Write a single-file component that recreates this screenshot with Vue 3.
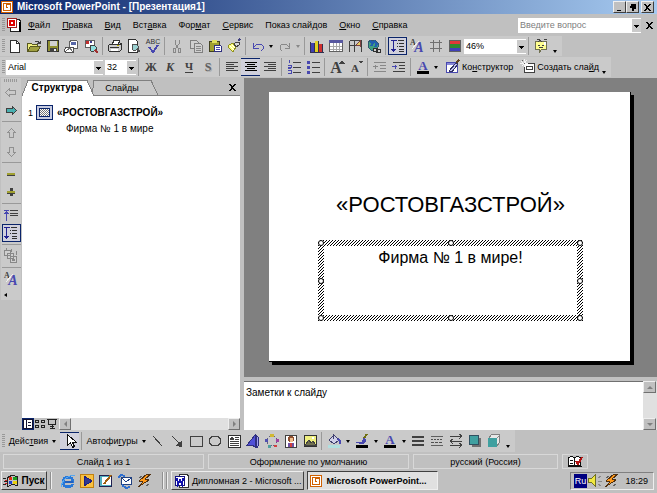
<script setup>
import { ref } from 'vue'

const font = ref('Arial')
const size = ref('32')
const zoom = ref('46%')
const notes = ref('Заметки к слайду')
const question = ref('')

const menus = [
  ['', 'Ф', 'айл'], ['', 'П', 'равка'], ['', 'В', 'ид'], ['Вст', 'а', 'вка'], ['Фор', 'м', 'ат'],
  ['', 'С', 'ервис'], ['Показ слай', 'д', 'ов'], ['', 'О', 'кно'], ['', 'С', 'правка'],
]

const lines = (x, ys, w, c = '#404040') => ys.map((y) => `<rect x="${x}" y="${y}" width="${w}" height="1" fill="${c}"/>`).join('')
const path = (d, stroke = '#404040', fill = 'none', w = 1) => `<path d="${d}" stroke="${stroke}" fill="${fill}" stroke-width="${w}"/>`
const box = (x, y, w, h, c) => `<rect x="${x}" y="${y}" width="${w}" height="${h}" fill="${c}"/>`
const blue = '#4848b0'
const glyph = (t, c, extra = '', x = 8, y = 13, s = 13) =>
  `<text x="${x}" y="${y}" font-size="${s}" text-anchor="middle" font-family="Liberation Serif, serif" font-weight="bold" fill="${c}" ${extra}>${t}</text>`

const icons = {
  app: box(0, 0, 12, 12, '#d06000') + path('M1.5 1.500h9v9h-9z', '#fff') + path('M4 3v5h4V5H6', '#fff', 'none', 2),
  doc: path('M4.500 2.500h9l1 2v10h-10z', '#202020', '#fff') + path('M1.500 1.500h9v9h-9z', '#a02020', '#fff') + path('M4 4v4h4V4z', '#e00000', 'none', 2) + box(13, 5, 2, 10, '#000'),
  fresh: path('M3.500 2.500h6l3 3v9h-9z', '#303030', '#fff') + path('M9.500 2.500v3h3', '#303030'),
  open: path('M1.500 13.500v-8h4l1 1h5v2', '#585820', '#f0f080') + path('M1.500 13.500l3-5h10l-3 5z', '#585820', '#a0a040') + path('M9 3.500h3l2 2m0-3v3h-3', '#404040'),
  save: path('M2.500 2.500h11v11h-11z', '#303030', '#909030') + box(5, 3, 7, 5, '#d0d0d0') + box(5, 10, 7, 4, '#404040') + box(9, 11, 2, 2, '#eee'),
  mail: path('M5.500 10.500v-7l2-1h5l1 1v7z', '#606060', '#fff') + box(7, 4, 5, 3, '#5868a8') + path('M1.500 9.500h8v5h-8l-1-2z', '#505050', '#fff') + path('M2 13l4-3 3 4', '#707070'),
  find: box(2, 2, 9, 8, '#fff') + path('M2.500 2.500h9v7h-9z', '#606060') + box(3, 3, 3, 3, '#c03030') + box(7, 3, 2, 2, '#404090') + path('M7 7h4l2 2v3l-2 1H8l-1-2z', '#404040', '#90e0e0') + path('M12 12l3 3', '#a03030', 'none', 2),
  print: path('M5.500 6.500l1-4h6l-1 4z', '#303030', '#fff') + path('M2.500 6.500h10l2-1v6l-2 2h-10l-1-1v-5z', '#303030', '#ccc') + box(3, 9, 9, 1, '#303030') + box(4, 11, 7, 2, '#fff') + box(10, 7, 2, 1, '#c0b000'),
  preview: path('M2.500 1.500h7l2 2v11h-9z', '#303030', '#fff') + path('M7 6h3l2 2v3l-2 1H7L6 10V8z', '#505050', '#9ad0d0') + path('M11 11l3 3', '#505050', 'none', 2),
  spell: `<text x="8" y="6" font-size="7" text-anchor="middle" font-family="Liberation Sans" fill="#303030">ABC</text>` + path('M4 9l4 5 5-7', blue, 'none', 2),
  cut: path('M6 2v4l4 5M10 2v4l-4 5M4.500 10.500h2v4h-2zM9.500 10.500h2v4h-2z', '#888'),
  copy: path('M2.500 2.500h6l2 2v6h-8z', '#808080', '#d0d0d0') + path('M6.500 5.500h6l2 2v7h-8z', '#808080', '#d0d0d0') + lines(8, [8, 10, 12], 5, '#888'),
  paste: path('M2.500 3.500h10v10h-10z', '#404020', '#a0a030') + box(5, 2, 5, 3, '#e0e060') + path('M7.500 7.500h6l1 1v5h-7z', '#303080', '#fff') + lines(9, [9, 11], 4, blue),
  brush: path('M3 7l4-2 3 4-3 5-5-5z', '#909020', '#ffff80') + path('M4 8l4 4M6 7l3 3', '#fff') + path('M8 6l2-2h3v3l-3 2z', '#404040', '#d8d8d8') + path('M12 3l2-2', '#404080', 'none', 2),
  undo: path('M3.500 5v5h5M4 9l3-3h4l2 2v3l-2 2', blue),
  redo: path('M12.500 5v5h-5M12 9l-3-3H5L3 8v3l2 2', '#888'),
  chart: box(2, 5, 3, 9, '#4040b0') + box(6, 3, 3, 11, '#e0d020') + box(10, 6, 3, 8, '#d03030') + path('M1.500 4v10.500h13M5.500 5v9M9.500 3v11M13.500 6v8', '#303050'),
  table: path('M1.500 2.500h13v11h-13z', '#606060', '#fff') + box(1, 2, 14, 3, '#5858a0') + path('M2 8.500h12M2 11.500h12M5.500 5v8M8.500 5v8M11.500 5v8', '#a8a8a8'),
  grid: path('M2.500 2.500h12v11M2.500 2.500v11M2 7.500h12M7.500 3v11', '#404040') + path('M9 7l4-4v5z', '#804040', '#e8d060'),
  globe: path('M4 2h5l3 3v4l-3 3H5L2 9V5z', '#305870', '#40a080') + path('M4 3l3 2-2 3M8 3l3 3-2 3', '#2060b0', 'none', 2) + path('M7.500 10.500h4v3h-4zM10.500 11.500h4v3h-4z', '#303030', '#d0d0d0'),
  outline: path('M3.500 3v11M1 11.500h5M2 12.500h3M1 2.500h6', '#202090') + lines(8, [2], 6, '#303030') + lines(9, [5, 8, 11, 13], 5, '#303030') + lines(7, [5, 8], 1, '#303030'),
  style: glyph('A', '#404040', '', 4, 7, 8) + glyph('A', blue, 'font-style="italic"', 10, 14, 14) + path('M3 11L10 3', '#eee'),
  hash: path('M5.500 2v12M11.500 2v12M2 4.500h12M2 10.500h12', '#707070'),
  colors: box(2, 2, 12, 4, '#e03838') + box(2, 6, 12, 4, '#308830') + box(2, 10, 12, 4, '#4040b8') + path('M2.500 2.500h11v11h-11z', '#606060'),
  help: path('M2.500 3.500h11v8h-5l-2 3v-3h-4z', '#707050', '#ffff90') + path('M5 4l2-2 2 2M5 7h2m2 0h2M6 9h4M4 1h3m4 0h3', '#404040') + box(11, 4, 2, 3, '#fff'),
  bold: glyph('Ж', '#404040', '', 8, 12, 12),
  ital: glyph('К', '#404040', 'font-style="italic"', 8, 12, 12),
  under: glyph('Ч', '#404040', '', 8, 11, 11) + lines(4, [13], 8),
  shade: glyph('S', '#aaa', '', 9, 13, 12) + glyph('S', '#606060', '', 8, 12, 12),
  left: lines(2, [3, 7, 11], 12) + lines(2, [5, 9], 8),
  center: lines(2, [3, 7, 11], 12, '#000') + lines(4, [5, 9], 8, '#000'),
  right: lines(2, [3, 7, 11], 12) + lines(6, [5, 9], 8),
  numbers: path('M3.500 1v3M2 6.500h3v2H2v1h3M2 11.500h3v3H2', blue) + lines(7, [3, 8, 13], 8),
  bullets: box(2, 2, 3, 3, blue) + box(2, 7, 3, 3, blue) + box(2, 12, 3, 3, blue) + lines(7, [3, 8, 13], 8),
  grow: glyph('A', '#404040', '', 7, 14, 16) + path('M11 4l2-2 2 2z', '#404040', '#404040'),
  shrink: glyph('A', '#404040', '', 7, 13, 11) + path('M11 2h4l-2 2z', '#404040', '#404040'),
  outdent: lines(2, [3, 12], 12, '#888') + lines(8, [6, 9], 6, '#888') + path('M1 7.500h5M3.500 5.500v4', '#888'),
  indent: lines(2, [3, 12], 12) + lines(8, [6, 9], 6) + path('M1 7.500h5M4.500 5.500v4', blue),
  fontcolor: glyph('A', blue, '', 8, 11, 13) + box(2, 12, 12, 3, '#000'),
  design: path('M1.500 3.500h11v10h-11z', '#4848b0', '#fff') + box(2, 4, 10, 2, '#8888d8') + path('M4 12l7-8 2 1-6 8z', '#303060', '#c0c0f0') + path('M11 4l3-3', '#604020', 'none', 2),
  slide: path('M4.500 4.500h10v9h-10z', '#404040', '#fff') + path('M6.500 7.500h6v3h-6z') + path('M1 2l5 5M4.500 0v8M0 4.500h8M7 1L2 7', '#f4f4f4') + path('M4 4.500h1M2 1l1 1', '#606060'),
  back: path('M6.500 4.500l-4 4 4 4v-2h6v-4h-6z', '#909090'),
  forward: path('M9.500 4.500l4 4-4 4v-2h-6v-4h6z', '#404040', '#48b0b0'),
  up: path('M8.500 3.500l4 4h-2v5h-4v-5h-2z', '#909090'),
  down: path('M8.500 13.500l4-4h-2v-5h-4v5h-2z', '#909090'),
  minus: box(4, 7, 8, 3, '#404040') + box(4, 7, 8, 2, '#a0a030'),
  plus: box(4, 7, 8, 3, '#404040') + box(7, 4, 3, 8, '#404040') + box(4, 7, 8, 2, '#a0a030'),
  collapse: path('M3.500 4v10M1 6.500h5M2 5.500h3M1 3.500h5', blue) + lines(7, [3, 6, 8], 8),
  summary: path('M1.500 2.500h6v5h-6zM4.500 5.500h6v5h-6zM7.500 8.500h6v6h-6z', '#888', '#d0d0d0') + lines(9, [11, 12], 3, '#888') + path('M3 0v3M8 1v3M13 3v4', '#888'),
  cursor: path('M5.500 1.500v11l3-3 2 5 2-1-2-4h4z', '#101010', '#fff'),
  line: path('M3 3l9 10'),
  arrow: path('M3 3l8 8') + path('M12.500 13.500v-5l-5 4z', '#404040', '#404040'),
  rect: path('M2.500 3.500h12v10h-12z'),
  oval: '<ellipse cx="8" cy="8" rx="6" ry="5" fill="none" stroke="#404040"/>',
  textbox: path('M2.500 2.500h12v12h-12z', '#303030', '#fff') + path('M4 7l2-3 2 3M5 6h2') + lines(9, [4, 6], 4) + lines(4, [8, 10, 12], 9),
  wordart: path('M2 12L10 2v12l-3-2H5z', '#303080', '#5050d8') + path('M11 2l2 2v9l-1 2z', '#303080', '#a0a0f0'),
  diagram: '<circle cx="8" cy="8" r="5" fill="none" stroke="#606080" stroke-dasharray="2"/>' + box(6, 1, 4, 3, '#d0b830') + box(1, 6, 3, 3, '#5050b0') + box(12, 6, 3, 3, '#a040a0') + box(4, 12, 3, 3, '#50a0a0') + box(10, 12, 3, 2, '#d04040'),
  clip: path('M2.500 2.500h11v12h-11z', '#404040', '#fff') + '<circle cx="8" cy="6" r="3" fill="#905030"/>' + box(7, 5, 3, 4, '#f0c090') + box(5, 10, 6, 4, '#7050a0') + box(7, 10, 2, 4, '#d04040'),
  picture: path('M2.500 2.500h12v11h-12z', '#303030', '#f0f080') + path('M3 12l4-5 2 3 2-2 3 4z', '#404040', '#707050') + box(10, 4, 2, 2, '#fff'),
  bucket: path('M3 7l5-5 5 5-5 4z', '#404070', '#d0d0e8') + path('M7.500 1v5', '#404070') + path('M12 6l2 2v3', blue, 'none', 2) + box(2, 12, 12, 3, '#b0e0e0'),
  pen: path('M2 9h6l2-4 2 2-2 3-4 1', blue, blue) + path('M10 5l3-4', '#707010', 'none', 2) + box(2, 12, 12, 3, '#000'),
  weight: box(2, 3, 12, 2, '#404040') + box(2, 7, 12, 2, '#404040') + box(2, 11, 12, 2, '#404040'),
  dash: lines(2, [3, 12], 12, '#606060') + path('M2 6.500h12', '#505050').replace('/>', ' stroke-dasharray="2 1"/>') + path('M2 9.500h12', '#505050').replace('/>', ' stroke-dasharray="3 1"/>'),
  arrows: path('M2 3.500h12M2 8.500h12M2 12.500h12M11 1l3 2-3 3M5 6L2 8l3 3M11 10l3 2-3 3'),
  shadow: box(5, 5, 9, 9, '#707070') + path('M2.500 2.500h9v9h-9z', '#305060', '#40a0a0'),
  cube: path('M2.500 5.500l3-4h8v8l-3 4h-8z', '#808080', '#e8e8e8') + box(2, 5, 9, 9, '#40a0a0') + path('M11 5l3-3', '#888'),
  normal: path('M1.500 1.500h9v9h-9zM4.500 1v10M6 4.500h3M6 7.500h3', '#101030', '#fff'),
  sorter: path('M1.500 2.500h3v2h-3zM7.500 2.500h3v2h-3zM1.500 7.500h3v2h-3zM7.500 7.500h3v2h-3z', '#202020'),
  show: path('M1 1.500h10M2.500 1v5h7V1M6.500 6v4M4 10.500h5M4 8.500h4', '#202020'),
  flag: path('M4.500 4.500l4-2 6 1v9l-5-1-5 2z', '#202020') + box(6, 4, 3, 3, '#e03010') + box(10, 4, 4, 3, '#20a020') + box(6, 8, 3, 3, '#2040d0') + box(10, 8, 4, 3, '#e8d010') + path('M0 5.500h3M1 8.500h3M0 11.500h3', '#202020') + path('M2 7h2M2 10h2', '#d02020'),
  ie: '<circle cx="8" cy="9" r="5" fill="none" stroke="#2878d8" stroke-width="3"/>' + box(5, 8, 8, 2, '#2060c0') + box(10, 10, 5, 1, '#c0c0c0') + path('M1 14C2 7 9 1 15 3', '#58a8f0'),
  media: path('M1.500 1.500h13v13h-13z', '#c08010', '#f8c040') + path('M5 3v10l8-5z', '#202080', '#303890'),
  desktop: path('M1.500 2.500h12v11h-12z', '#202050', '#50b0c0') + path('M4 4h8v7H4z', '#fff', '#fff') + path('M6 11l7-9', '#a06010', 'none', 2),
  outlook: path('M4.500 4.500h10v7h-10z', '#204080', '#fff') + path('M5 5l4 4 5-4', '#204080') + path('M1 5l3-3 4 1M13 14l-4 1-4-3', '#3070d0', 'none', 2),
  winamp: path('M11 1L3 8l4 1-5 5 11-7-4-1 6-5z', '#503010', '#ff9818') + path('M3 5l3-2M10 13l3-2', '#606060'),
  word: path('M5.500 1.500h8l1 2v11h-9z', '#303030', '#fff') + path('M1.500 3.500h9v9h-9z', '#101080', '#fff') + path('M3 5l1 6 2-4 2 4 1-6', '#1010b0', 'none', 2),
  speaker: path('M1.500 5.500h3l4-4v12l-4-4h-3z', '#707020', '#f0e840') + path('M11 5l3-2M11 8h4M11 11l3 2', '#888'),
  book: path('M1.500 3.500l3-1 3 1 3-1 3 1v8h-12z', '#101010', '#fff') + path('M7.500 4v8M1 12.500h14M3 6h3M3 9h3', '#101010') + path('M9 7l2 3 4-7', '#b01010', 'none', 2),
}

const standard = [
  ['fresh', 'Создать'], ['open', 'Открыть'], ['save', 'Сохранить'], ['mail', 'Сообщение'], ['find', 'Найти'], '|',
  ['print', 'Печать'], ['preview', 'Просмотр'], ['spell', 'Орфография'], '|',
  ['cut', 'Вырезать'], ['copy', 'Копировать'], ['paste', 'Вставить'], ['brush', 'Формат по образцу'], '|',
  ['undo', 'Отменить'], 'v', ['redo', 'Вернуть'], 'w', '|',
  ['chart', 'Диаграмма'], ['table', 'Таблица'], ['grid', 'Таблицы и границы'], ['globe', 'Гиперссылка'], '|',
  ['outline', 'Развернуть все', true], ['style', 'Формат'], ['hash', 'Сетка'], ['colors', 'Цвет или оттенки'],
]
const format = [
  '|', ['bold', 'Полужирный'], ['ital', 'Курсив'], ['under', 'Подчеркнутый'], ['shade', 'Тень'], '|',
  ['left', 'По левому краю'], ['center', 'По центру', true], ['right', 'По правому краю'], '|',
  ['numbers', 'Нумерация'], ['bullets', 'Маркеры'], '|', ['grow', 'Увеличить шрифт'], ['shrink', 'Уменьшить шрифт'], '|',
  ['outdent', 'Уменьшить отступ'], ['indent', 'Увеличить отступ'], '|', ['fontcolor', 'Цвет шрифта'], 'v',
]
const side = [
  ['back', 'Повысить уровень'], ['forward', 'Понизить уровень'], '|', ['up', 'Вверх'], ['down', 'Вниз'], '|',
  ['minus', 'Свернуть'], ['plus', 'Развернуть'], '|', ['collapse', 'Свернуть все'], ['outline', 'Развернуть все', true], '|',
  ['summary', 'Итоговый слайд'], '|', ['style', 'Формат'],
]
const drawing = [
  ['line', 'Линия'], ['arrow', 'Стрелка'], ['rect', 'Прямоугольник'], ['oval', 'Овал'], ['textbox', 'Надпись'],
  ['wordart', 'WordArt'], ['diagram', 'Организационная диаграмма'], ['clip', 'Картинка'], ['picture', 'Рисунок'], '|',
  ['bucket', 'Цвет заливки'], 'v', ['pen', 'Цвет линий'], 'v', ['fontcolor', 'Цвет шрифта'], 'v',
  ['weight', 'Тип линии'], ['dash', 'Тип штриха'], ['arrows', 'Вид стрелки'], ['shadow', 'Тень'], ['cube', 'Объем'],
]
const views = [['normal', 'Обычный', true], ['sorter', 'Сортировщик'], ['show', 'Показ']]
const quick = [['ie', 'Internet Explorer'], ['media', 'Media Player'], ['desktop', 'Свернуть все окна'], ['outlook', 'Outlook Express'], ['winamp', 'Winamp']]
const handles = ['nw', 'n', 'ne', 'w', 'e', 'sw', 's', 'se']
</script>

<template>
  <div class="screen">
    <header class="titlebar">
      <svg class="icon small" viewBox="0 0 12 12" v-html="icons.app" />
      <h1>Microsoft PowerPoint - [Презентация1]</h1>
      <button class="win" aria-label="Свернуть"><svg viewBox="0 0 9 9"><path d="M2 7h4v1H2z" /></svg></button>
      <button class="win" aria-label="Восстановить"><svg viewBox="0 0 9 9"><path d="M3 1h5v5H6v2H4V5H2V3h1z" /></svg></button>
      <button class="win close" aria-label="Закрыть"><svg viewBox="0 0 9 9"><path d="M1 1h2l1.500 2L6 1h2L5.500 4.500 8 8H6L4.500 6 3 8H1l2.500-3.500z" /></svg></button>
    </header>

    <nav class="menubar">
      <i class="grip" />
      <svg class="icon" viewBox="0 0 16 16" v-html="icons.doc" />
      <button v-for="m in menus" :key="m.join('')" class="menu">{{ m[0] }}<u>{{ m[1] }}</u>{{ m[2] }}</button>
      <div class="combo ask">
        <input v-model="question" aria-label="Введите вопрос" placeholder="Введите вопрос">
      </div>
      <button class="docclose" aria-label="Закрыть документ"><svg viewBox="0 0 9 9"><path d="M1 1h2l1.500 2L6 1h2L5.500 4.500 8 8H6L4.500 6 3 8H1l2.500-3.500z" /></svg></button>
    </nav>

    <div class="bar">
      <i class="grip" />
      <template v-for="(t, i) in standard" :key="i">
        <i v-if="t === '|'" class="sep" />
        <button v-else-if="t === 'v' || t === 'w'" class="drop" :class="{ dim: t === 'w' }" aria-label="Список" />
        <button v-else class="tool" :class="{ on: t[2] }" :aria-label="t[1]"><svg class="icon" viewBox="0 0 16 16" v-html="icons[t[0]]" /></button>
      </template>
      <div class="combo zoom">
        <select v-model="zoom" aria-label="Масштаб"><option>46%</option><option>100%</option></select>
      </div>
      <i class="sep" />
      <button class="tool" aria-label="Справка"><svg class="icon" viewBox="0 0 16 16" v-html="icons.help" /></button>
      <button class="drop low" aria-label="Параметры панели" />
    </div>

    <div class="bar">
      <i class="grip" />
      <div class="combo font">
        <select v-model="font" aria-label="Шрифт"><option>Arial</option><option>Tahoma</option></select>
      </div>
      <div class="combo size">
        <select v-model="size" aria-label="Размер"><option>32</option><option>44</option></select>
      </div>
      <template v-for="(t, i) in format" :key="i">
        <i v-if="t === '|'" class="sep" />
        <button v-else-if="t === 'v'" class="drop" aria-label="Список" />
        <button v-else class="tool" :class="{ on: t[2], edge: t[2] }" :aria-label="t[1]"><svg class="icon" viewBox="0 0 16 16" v-html="icons[t[0]]" /></button>
      </template>
      <button class="wide"><svg class="icon" viewBox="0 0 16 16" v-html="icons.design" /><span>Ко<u>н</u>структор</span></button>
      <button class="wide"><svg class="icon" viewBox="0 0 16 16" v-html="icons.slide" /><span>Создать сла<u>й</u>д</span></button>
      <button class="drop low" aria-label="Параметры панели" />
    </div>

    <main class="work">
      <div class="side">
        <i class="grip flat" />
        <template v-for="(t, i) in side" :key="i">
          <i v-if="t === '|'" class="sep flat" />
          <button v-else class="tool" :class="{ on: t[2] }" :aria-label="t[1]"><svg class="icon" viewBox="0 0 16 16" v-html="icons[t[0]]" /></button>
        </template>
        <button class="more" aria-label="Параметры панели" />
      </div>

      <section class="outline">
        <div class="tabs" role="tablist">
          <button class="tab active" role="tab" aria-selected="true">
            <svg viewBox="0 0 72 16" preserveAspectRatio="none"><path d="M0 16L6 .5h59L72 16" /></svg><span>Структура</span>
          </button>
          <button class="tab" role="tab" aria-selected="false">
            <svg viewBox="0 0 66 15" preserveAspectRatio="none"><path d="M0 15L2 .5h57L66 15" /></svg><span>Слайды</span>
          </button>
          <button class="tabclose" aria-label="Закрыть область"><svg viewBox="0 0 9 9"><path d="M1 1h2l1.500 2L6 1h2L5.500 4.500 8 8H6L4.500 6 3 8H1l2.500-3.500z" /></svg></button>
        </div>
        <div class="tree">
          <div class="node"><span class="num">1</span><i class="thumb" /><strong>«РОСТОВГАЗСТРОЙ»</strong></div>
          <p>Фирма № 1 в мире</p>
        </div>
        <div class="viewbar">
          <button v-for="v in views" :key="v[0]" class="view" :class="{ on: v[2] }" :aria-label="v[1]"><svg class="icon small" viewBox="0 0 12 12" v-html="icons[v[0]]" /></button>
          <div class="hscroll">
            <button class="sb l" aria-label="Влево" /><button class="sb r" aria-label="Вправо" />
          </div>
        </div>
      </section>

      <section class="editor">
        <div class="stage">
          <article class="page">
            <h2>«РОСТОВГАЗСТРОЙ»</h2>
            <div class="frame">
              <svg class="hatch" aria-hidden="true">
                <defs><pattern id="hatch" width="3" height="3" patternUnits="userSpaceOnUse"><path d="M2 0h1v1H2zM1 1h1v1H1zM0 2h1v1H0z" /></pattern></defs>
                <rect width="100%" height="100%" fill="url(#hatch)" />
              </svg>
              <p>Фирма № 1 в мире!</p>
              <i v-for="h in handles" :key="h" class="handle" :class="h" />
            </div>
          </article>
        </div>
        <div class="notes">
          <textarea v-model="notes" aria-label="Заметки к слайду" />
          <div class="vscroll">
            <button class="sb t" aria-label="Вверх" /><button class="sb b" aria-label="Вниз" />
          </div>
        </div>
      </section>
    </main>

    <div class="bar draw">
      <i class="grip" />
      <button class="menu actions">Дейс<u>т</u>вия<i class="tri" /></button>
      <button class="tool on edge" aria-label="Выбор объектов"><svg class="icon" viewBox="0 0 16 16" v-html="icons.cursor" /></button>
      <i class="sep" />
      <button class="menu shapes">Автофи<u>г</u>уры<i class="tri" /></button>
      <template v-for="(t, i) in drawing" :key="i">
        <i v-if="t === '|'" class="sep" />
        <button v-else-if="t === 'v'" class="drop" aria-label="Список" />
        <button v-else class="tool" :aria-label="t[1]"><svg class="icon" viewBox="0 0 16 16" v-html="icons[t[0]]" /></button>
      </template>
      <button class="drop low" aria-label="Параметры панели" />
    </div>

    <footer class="status">
      <span class="cell">Слайд 1 из 1</span>
      <span class="cell">Оформление по умолчанию</span>
      <span class="cell lang">русский (Россия)</span>
      <span class="cell check"><svg class="icon" viewBox="0 0 16 16" v-html="icons.book" /></span>
    </footer>

    <div class="taskbar">
      <button class="start"><svg class="icon" viewBox="0 0 16 16" v-html="icons.flag" />Пуск</button>
      <i class="divider" />
      <button v-for="q in quick" :key="q[0]" class="tool" :aria-label="q[1]"><svg class="icon" viewBox="0 0 16 16" v-html="icons[q[0]]" /></button>
      <i class="divider gap" /><i class="divider" />
      <button class="task"><svg class="icon" viewBox="0 0 16 16" v-html="icons.word" /><span>Дипломная 2 - Microsoft ...</span></button>
      <button class="task current"><svg class="icon small" viewBox="0 0 12 12" v-html="icons.app" /><span>Microsoft PowerPoint...</span></button>
      <div class="tray">
        <b>Ru</b>
        <svg class="icon" viewBox="0 0 16 16" v-html="icons.speaker" />
        <svg class="icon" viewBox="0 0 16 16" v-html="icons.winamp" />
        <time>18:29</time>
      </div>
    </div>
  </div>
</template>

<style>
body {
  margin: 0;
  background: #c0c0c0;
}
</style>

<style scoped>
.screen {
  display: flex;
  flex-direction: column;
  min-height: 100vh;
  box-sizing: border-box;
  padding-bottom: 3px;
  background: #c0c0c0;
  color: #000;
  font: 9px/12px "Liberation Sans", Arial, sans-serif;
  white-space: nowrap;
}
.screen * {
  box-sizing: border-box;
}
button {
  display: flex;
  align-items: center;
  justify-content: center;
  flex: none;
  margin: 0;
  padding: 0;
  border: 0;
  background: none;
  color: inherit;
  font: inherit;
}
svg {
  display: block;
  flex: none;
  shape-rendering: crispEdges;
}
.icon {
  width: 16px;
  height: 16px;
}
.icon.small {
  width: 12px;
  height: 12px;
}

.titlebar {
  display: flex;
  align-items: center;
  height: 14px;
  padding: 0 3px 0 1px;
  background: linear-gradient(90deg, #0a246a, #a6caf0);
  color: #fff;
}
.titlebar h1 {
  flex: 1;
  margin: 0 0 0 4px;
  font-size: 10px;
  line-height: 14px;
}
.win {
  width: 13px;
  height: 12px;
  background: #c0c0c0;
  border: 1px solid;
  border-color: #f0f0f0 #404040 #404040 #f0f0f0;
}
.win.close {
  margin-left: 2px;
}
.win svg,
.docclose svg,
.tabclose svg {
  width: 9px;
  height: 9px;
}

.menubar {
  display: flex;
  align-items: center;
  height: 22px;
  padding-left: 2px;
}
.menubar .icon {
  margin: 0 0 0 1px;
}
.menu {
  height: 18px;
  padding: 0 6px;
}
.ask {
  width: 123px;
  margin-left: auto;
}
.docclose {
  width: 16px;
}

.bar {
  display: flex;
  align-items: center;
  align-self: flex-start;
  height: 20px;
  margin-bottom: 1px;
  padding: 0 2px;
  background: #cacaca;
}
.grip {
  flex: none;
  width: 3px;
  height: 14px;
  background: repeating-linear-gradient(#999 0 1px, transparent 1px 2px);
}
.grip.flat {
  width: 14px;
  height: 3px;
  margin: 1px 0;
  background: repeating-linear-gradient(90deg, #999 0 1px, transparent 1px 2px);
}
.sep {
  flex: none;
  width: 1px;
  height: 18px;
  margin: 0 2px;
  background: #999;
}
.sep.flat {
  width: 19px;
  height: 1px;
  margin: 2px 0;
}
.tool {
  width: 19px;
  height: 18px;
}
.tool.on,
.view.on {
  border: 1px solid #0a246a;
  background: #d0d0dc;
}
.tool.edge {
  border-width: 1px 0;
}
.drop {
  width: 8px;
  height: 18px;
}
.drop::before,
.tri {
  content: "";
  border: 2px solid transparent;
  border-top: 3px solid #000;
  border-bottom: 0;
}
.drop.dim::before {
  border-top-color: #888;
}
.drop.low {
  width: 10px;
  align-items: flex-end;
}
.drop.low::before {
  margin-bottom: 2px;
}
.tri {
  margin-left: 4px;
}
.combo {
  position: relative;
  display: flex;
  height: 15px;
  background: #fff;
}
.combo::after {
  content: "";
  position: absolute;
  right: 0;
  top: 1px;
  bottom: 1px;
  width: 9px;
  pointer-events: none;
  background: linear-gradient(#000, #000) center 6px / 5px 1px no-repeat, linear-gradient(#000, #000) center 7px / 3px 1px no-repeat, linear-gradient(#000, #000) center 8px / 1px 1px no-repeat, #cacaca;
}
.combo select,
.combo input {
  flex: 1;
  min-width: 0;
  height: 100%;
  margin: 0;
  padding: 0 2px;
  border: 0;
  background: none;
  color: #000;
  font: inherit;
  appearance: none;
}
.combo input::placeholder {
  color: #808080;
  opacity: 1;
}
.zoom {
  width: 62px;
}
.font {
  width: 97px;
  margin: 0 2px 0 1px;
}
.size {
  width: 31px;
}
.wide {
  height: 18px;
  gap: 1px;
  margin-left: 5px;
}
.wide + .wide {
  margin-left: 7px;
}

.work {
  display: flex;
  flex: 1;
}
.side {
  display: flex;
  flex-direction: column;
  align-items: center;
  align-self: flex-start;
  flex: none;
  width: 20px;
  height: 222px;
  margin: 0 1px;
  background: #cacaca;
}
.more {
  width: 3px;
  height: 4px;
  margin: 5px auto 0 3px;
  background: #000;
  clip-path: polygon(0 50%, 100% 0, 100% 100%);
}
.outline {
  display: flex;
  flex-direction: column;
  flex: 0 0 218px;
  background: #fff;
}
.tabs {
  display: flex;
  align-items: flex-end;
  height: 18px;
  padding-top: 2px;
  background: #c0c0c0;
  border-bottom: 1px solid #808080;
}
.tab {
  position: relative;
  width: 66px;
  height: 15px;
  margin-left: -2px;
  padding-right: 6px;
}
.tab.active {
  z-index: 1;
  width: 72px;
  height: 16px;
  margin: 0 0 -1px;
  padding-right: 2px;
  font-size: 10px;
  font-weight: bold;
}
.tab svg {
  position: absolute;
  inset: 0;
  width: 100%;
  height: 100%;
  fill: #c8c8c8;
  stroke: #808080;
}
.tab.active svg {
  fill: #fff;
}
.tab span {
  position: relative;
}
.tabclose {
  width: 16px;
  height: 16px;
  margin-left: auto;
}
.tree {
  flex: 1;
  padding: 9px 6px;
  font-size: 10px;
}
.node {
  display: flex;
  align-items: center;
  gap: 4px;
}
.num {
  width: 4px;
  font-size: 9px;
}
.thumb {
  width: 17px;
  height: 15px;
  border: 1px solid #0a246a;
  padding: 2px;
  background: repeating-conic-gradient(#777 0 25%, #fff 0 50%) 0 0 / 2px 2px content-box, #c8cce0;
  outline: 1px solid #0a246a;
  outline-offset: -4px;
}
.tree p {
  margin: 3px 0 0 38px;
}
.viewbar {
  display: flex;
  height: 12px;
  background: #c0c0c0;
}
.view {
  width: 12px;
}
.hscroll {
  display: flex;
  justify-content: space-between;
  flex: 1;
  margin-left: 1px;
  background: #e0e0e0;
}
.sb {
  width: 12px;
  height: 12px;
  background: #c0c0c0;
  border: 1px solid;
  border-color: #eee #707070 #707070 #eee;
}
.sb::before {
  content: "";
  border: 3px solid transparent;
}
.sb.l::before {
  border-left: 0;
  border-right-color: #808080;
}
.sb.r::before {
  border-right: 0;
  border-left-color: #808080;
}
.sb.t::before {
  border-top: 0;
  border-bottom-color: #808080;
}
.sb.b::before {
  border-bottom: 0;
  border-top-color: #808080;
}

.editor {
  display: flex;
  flex-direction: column;
  flex: 1;
  min-width: 0;
  margin-left: 4px;
}
.stage {
  display: flex;
  flex: 1;
  padding: 14px 26px 15px 25px;
  background: #808080;
}
.page {
  flex: 1;
  padding: 98px 47px 0 49px;
  background: #fff;
  border: 0 solid #000;
  border-width: 0 1px 1px 0;
  box-shadow: 3px 3px 0 #000;
  text-align: center;
}
.page h2 {
  margin: 0;
  font-size: 22px;
  font-weight: normal;
  line-height: 30px;
}
.frame {
  position: relative;
  height: 81px;
  margin-top: 20px;
  padding: 6px;
}
.hatch {
  position: absolute;
  inset: 0;
  width: 100%;
  height: 100%;
}
.frame p {
  position: relative;
  height: 100%;
  margin: 0;
  background: #fff;
  font-size: 16px;
  line-height: 24px;
}
.handle {
  position: absolute;
  width: 6px;
  height: 6px;
  border: 1px solid #000;
  border-radius: 50%;
  background: #fff;
}
.n,
.s {
  left: calc(50% - 3px);
}
.w,
.e {
  top: calc(50% - 3px);
}
.nw,
.n,
.ne {
  top: 0;
}
.sw,
.s,
.se {
  bottom: 0;
}
.nw,
.w,
.sw {
  left: 0;
}
.ne,
.e,
.se {
  right: 0;
}
.notes {
  display: flex;
  height: 53px;
  padding-top: 4px;
  background: #c0c0c0;
}
.notes textarea {
  flex: 1;
  min-width: 0;
  margin: 0;
  padding: 5px 2px;
  border: 0;
  border-top: 1px solid #707070;
  background: #fff;
  color: #000;
  font: 10px/12px "Liberation Sans", Arial, sans-serif;
  resize: none;
  overflow: hidden;
}
.vscroll {
  display: flex;
  flex-direction: column;
  justify-content: space-between;
  width: 14px;
  background: #e0e0e0;
}
.vscroll .sb {
  width: 13px;
}

.draw {
  height: 22px;
  margin: 0;
}
.draw .drop:not(.low) {
  width: 9px;
}
.actions {
  width: 55px;
  padding: 0;
}
.shapes {
  width: 64px;
  padding: 0;
}

.status {
  display: flex;
  gap: 4px;
  padding: 2px 3px;
}
.cell {
  display: flex;
  align-items: center;
  justify-content: center;
  flex: 0 1 201px;
  height: 15px;
  border: 1px solid #d8d8d8;
}
.lang {
  flex-basis: 145px;
}
.check {
  flex-basis: 26px;
}

.taskbar {
  display: flex;
  align-items: center;
  height: 19px;
  padding: 0 3px 0 1px;
}
.start,
.task {
  height: 19px;
  padding: 0 2px;
  gap: 2px;
  border: 1px solid;
  border-color: #eee #404040 #404040 #eee;
}
.start {
  width: 46px;
  margin-right: 3px;
  font-weight: bold;
  font-size: 10px;
}
.divider {
  width: 2px;
  height: 17px;
  margin-right: 6px;
  border-left: 1px solid #909090;
  border-right: 1px solid #eee;
}
.divider.gap {
  margin: 0 2px 0 9px;
}
.divider.gap + .divider {
  margin-right: 3px;
}
.task {
  justify-content: flex-start;
  flex: 0 1 131px;
  margin-right: 3px;
}
.task.current {
  gap: 4px;
  border-color: #404040 #eee #eee #404040;
  background: #e0e0e0;
  font-weight: bold;
}
.tray {
  display: flex;
  align-items: center;
  width: 84px;
  height: 18px;
  margin-left: auto;
  padding: 0 5px 0 3px;
  border: 1px solid;
  border-color: #808080 #eee #eee #808080;
}
.tray b {
  width: 13px;
  background: #000080;
  color: #fff;
  font-weight: normal;
  line-height: 14px;
  text-align: center;
}
.tray time {
  margin-left: auto;
}
</style>
